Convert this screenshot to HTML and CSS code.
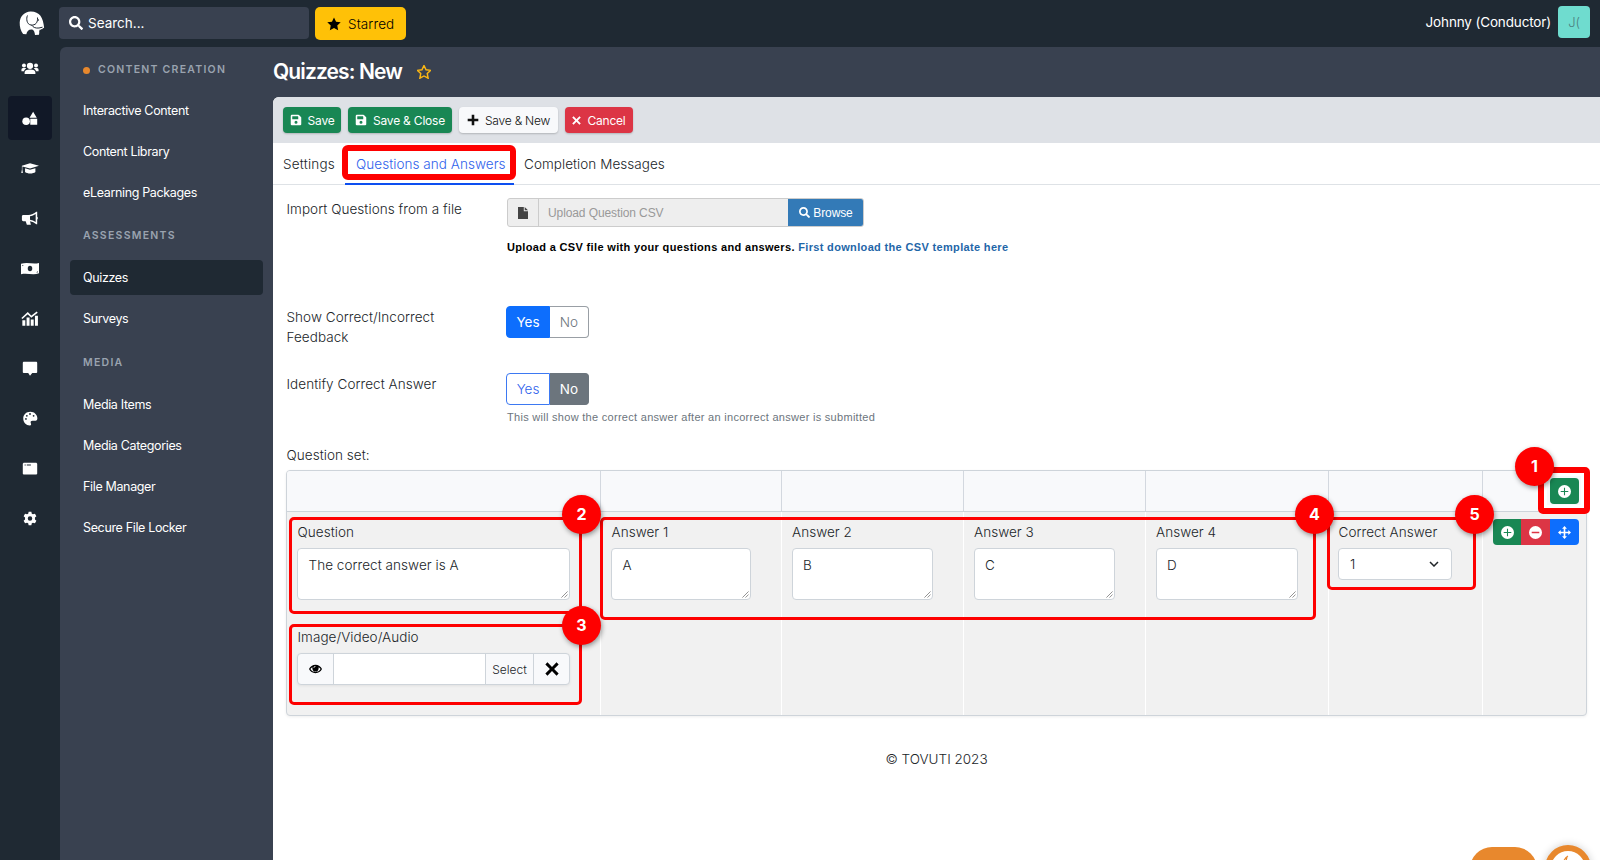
FILE: index.html
```
<!DOCTYPE html>
<html lang="en">
<head>
<meta charset="utf-8">
<title>Quizzes: New</title>
<link rel="stylesheet" href="styles.css">
</head>
<body>
<svg class="defs" aria-hidden="true">
  <symbol id="search" viewBox="0 0 512 512"><path d="M505 442.700 405.300 343c-4.500-4.500-10.600-7-17-7H372c27.600-35.300 44-79.700 44-128C416 93.100 322.900 0 208 0S0 93.100 0 208s93.100 208 208 208c48.300 0 92.700-16.400 128-44v16.300c0 6.400 2.500 12.500 7 17l99.700 99.700c9.400 9.400 24.600 9.400 33.900 0l28.300-28.300c9.400-9.400 9.400-24.600.1-34zM208 336c-70.700 0-128-57.200-128-128 0-70.700 57.200-128 128-128 70.700 0 128 57.200 128 128 0 70.700-57.200 128-128 128z"/></symbol>
  <symbol id="star" viewBox="0 0 24 24"><path d="m12 .8 3.500 7.300 8 1.100-5.900 5.500 1.500 8L12 18.800l-7.100 3.900 1.500-8L.5 9.200l8-1.100z"/></symbol>
  <symbol id="save" viewBox="0 0 448 512"><path d="M434 130 350 46a48 48 0 0 0-34-14H48A48 48 0 0 0 0 80v352a48 48 0 0 0 48 48h352a48 48 0 0 0 48-48V164a48 48 0 0 0-14-34zM224 416a64 64 0 1 1 0-128 64 64 0 0 1 0 128zm96-304v100a12 12 0 0 1-12 12H76a12 12 0 0 1-12-12V108a12 12 0 0 1 12-12h228z"/></symbol>
  <symbol id="times" viewBox="0 0 20 20"><path d="M3.500.5 10 7l6.500-6.500 3 3L13 10l6.500 6.500-3 3L10 13l-6.500 6.500-3-3L7 10 .5 3.500z"/></symbol>
  <symbol id="plus-circle" viewBox="0 0 24 24"><path fill-rule="evenodd" d="M12 0a12 12 0 1 1 0 24 12 12 0 0 1 0-24zM11 5v6H5v2h6v6h2v-6h6v-2h-6V5z"/></symbol>
</svg>

<header class="topbar">
  <svg class="logo" viewBox="0 0 25 25"><path fill="#fff" d="M11 .4C5 .6.6 5 .2 11.400 0 15.500 1.300 20 3.600 23l3.200.2c.7-2.800 2.300-4.800 4.900-4.800 2.300 0 3.300 1.400 3.800 5.500l4-.1.600-5c2 .2 4-.5 4.500-2.200C23.800 6.500 20 .2 11 .4z"/><path fill="none" stroke="#1f2933" stroke-width="1" d="M8 4.500c-1.500 3-.8 9 3.500 9.500 4.500.6 7-2.500 6.500-7.500M12 14c2 2.700 4 3.300 7.500 3l3.500-.8M20 20.300l4.300-3"/><circle cx="18.800" cy="9" r=".8" fill="#1f2933"/></svg>
  <div class="search"><svg><use href="#search"/></svg><span>Search...</span></div>
  <button class="starred"><svg><use href="#star"/></svg><span>Starred</span></button>
  <div class="user"><span>Johnny (Conductor)</span><div class="avatar">J(</div></div>
</header>

<div class="shell">
  <nav class="rail">
    <a><svg viewBox="0 0 20 16"><circle cx="10" cy="5" r="3.500"/><circle cx="3.300" cy="4.600" r="2.200"/><circle cx="16.700" cy="4.600" r="2.200"/><path d="M4 14v-1.500C4 10 6 9 10 9s6 1 6 3.500V14zM.5 11V9.500c0-1.700 1.300-2 3.500-2 .9 0 1.500.2 1.800.5C4.500 8.800 3.500 9.700 3.300 11zM19.500 11V9.500c0-1.700-1.300-2-3.500-2-.9 0-1.500.2-1.800.5 1.300.8 2.300 1.700 2.500 3z"/></svg></a>
    <a class="on"><svg viewBox="0 0 20 16"><path d="M13.500.5 17.500 7.300h-8zM10.300 8.300h7.700V15h-7.700z"/><circle cx="5.700" cy="11.100" r="4.200"/></svg></a>
    <a><svg viewBox="0 0 20 16"><path d="M10 2.200 20 5l-10 3L1.500 5.800V9l.6 4H.3L1 9V5zM4.500 7.800 10 9.400l6-1.800V12c-2.500 2.200-9 2.200-11.500 0z"/></svg></a>
    <a><svg viewBox="0 0 20 16"><path fill-rule="evenodd" d="M1 5.500C1 4.700 1.700 4 2.500 4H8c3.500 0 6.500-1.500 9-3.500h1V6c1 .6 1 2.400 0 3v5.500h-1c-2-1.600-4.500-3-7-3.400L11 15H6.500l-1.300-4H2.500C1.700 11 1 10.300 1 9.500zM10 5.500v4c2.300.4 4.400 1.300 6.300 2.500v-9C14.400 4.200 12.300 5.200 10 5.500z"/></svg></a>
    <a><svg viewBox="0 0 20 16"><path fill-rule="evenodd" d="M0 2.800c7-2.600 13 .8 20-1v11.600c-7 2.600-13-.8-20 1zM10 5a2.500 3 0 1 0 0 6 2.500 3 0 0 0 0-6zM1.500 4v1.600L3 4zM17 12.500h1.600v-1.600z"/></svg></a>
    <a><svg viewBox="0 0 20 16"><path d="M1.500 10h3.300v6H1.500zm4.700-3h3.300v9H6.200zM10.800 9h3.300v7h-3.300zm4.700-4h3.300v11h-3.300z"/><path d="M1 8l6.500-6 4 4L18 .8" fill="none" stroke="#fff" stroke-width="1.800"/></svg></a>
    <a><svg viewBox="0 0 20 16"><path d="M3.500.5h13c1 0 1.500.5 1.500 1.300v10c0 .8-.5 1.200-1.500 1.200h-4L10 16l-2-3H3.500C2.500 13 2 12.600 2 11.800v-10C2 1 2.500.5 3.500.5z"/></svg></a>
    <a><svg viewBox="0 0 20 16"><path fill-rule="evenodd" d="M10.500.5c-4.800 0-8 3.200-8 7.500s3.200 7.700 7.300 7.700c2 0 1.500-1.500 1-2.700-.4-1.500.4-2.500 2-2.500h3.400c1.300 0 2-1.200 2-2.500 0-4.300-3.500-7.500-7.700-7.500zM5.500 7.500a1 1 0 1 0 0 2 1 1 0 0 0 0-2zm1-3.500a1 1 0 1 0 0 2 1 1 0 0 0 0-2zM10 2a1 1 0 1 0 0 2 1 1 0 0 0 0-2zm4 2a1 1 0 1 0 0 2 1 1 0 0 0 0-2z"/></svg></a>
    <a><svg viewBox="0 0 20 16"><path fill-rule="evenodd" d="M3.500 1.500h13c.8 0 1.500.7 1.500 1.500v10.500c0 .6-.7 1.300-1.500 1.300h-13c-.8 0-1.500-.7-1.500-1.300V3c0-.8.700-1.500 1.500-1.500zM4 3.500v1.300h1.200V3.500zm2.400 0v1.300H11V3.500z"/></svg></a>
    <a><svg viewBox="0 0 20 16"><path fill-rule="evenodd" d="M8.500.5h3l.5 2.200 1.300.7 2.200-.7 1.600 2.700L15.500 7v2l1.600 1.600-1.600 2.700-2.200-.7-1.300.7-.5 2.200h-3L8 13.300l-1.300-.7-2.200.7-1.600-2.700L4.500 9V7L2.900 5.400l1.600-2.700 2.200.7L8 2.700zM10 5.500a2.500 2.500 0 1 0 0 5 2.500 2.500 0 0 0 0-5z"/></svg></a>
  </nav>

  <aside class="side">
    <h2 class="first"><i class="dot"></i>CONTENT CREATION</h2>
    <a>Interactive Content</a><a>Content Library</a><a>eLearning Packages</a>
    <h2 class="assess">ASSESSMENTS</h2>
    <a class="on">Quizzes</a><a>Surveys</a>
    <h2 class="media">MEDIA</h2>
    <a>Media Items</a><a>Media Categories</a><a>File Manager</a><a>Secure File Locker</a>
  </aside>

  <main class="main">
    <div class="title"><h1>Quizzes: New</h1><svg><use href="#star"/></svg></div>
    <section class="panel">
      <div class="toolbar">
        <button class="btn green w-save"><svg><use href="#save"/></svg><span>Save</span></button>
        <button class="btn green w-close"><svg><use href="#save"/></svg><span>Save &amp; Close</span></button>
        <button class="btn light w-new"><svg viewBox="0 0 14 14"><path d="M5.500.8h3v4.700h4.700v3H8.500v4.700h-3V8.500H.8v-3h4.700z"/></svg><span>Save &amp; New</span></button>
        <button class="btn red w-cancel"><svg class="x"><use href="#times"/></svg><span>Cancel</span></button>
      </div>
      <div class="tabs">
        <a class="tab t1">Settings</a><a class="tab t2 on">Questions and Answers</a><a class="tab t3">Completion Messages</a>
      </div>
      <div class="form">
        <div class="row import">
          <label>Import Questions from a file</label>
          <div class="ctl">
            <div class="upload">
              <span class="addon"><svg viewBox="0 0 10 12"><path d="M0 0h5.800v4.200H10V12H0zM6.700 0 10 3.300H6.700z"/></svg></span>
              <span class="field">Upload Question CSV</span>
              <span class="browse"><svg><use href="#search"/></svg><span>Browse</span></span>
            </div>
            <p class="note"><span>Upload a CSV file with your questions and answers. <a>First download the CSV template here</a></span></p>
          </div>
        </div>
        <div class="row feedback">
          <label>Show Correct/Incorrect<br>Feedback</label>
          <div class="ctl"><div class="toggle"><span class="yes filled">Yes</span><span class="no">No</span></div></div>
        </div>
        <div class="row identify">
          <label>Identify Correct Answer</label>
          <div class="ctl"><div class="toggle"><span class="yes">Yes</span><span class="no filled">No</span></div>
          <p class="hint"><span>This will show the correct answer after an incorrect answer is submitted</span></p></div>
        </div>
        <label class="set">Question set:</label>
        <div class="table">
          <div class="thead"><div></div><div></div><div></div><div></div><div></div><div></div>
            <div class="acts"><span class="act add solo"><svg><use href="#plus-circle"/></svg></span></div></div>
          <div class="tbody">
            <div class="cell">
              <label>Question</label><div class="area">The correct answer is A<svg class="grip" viewBox="0 0 8 8"><path d="M.5 7.500l7-7M4 7.500 7.500 4"/></svg></div>
              <label class="mlabel">Image/Video/Audio</label>
              <div class="mediabox">
                <span class="eye"><svg viewBox="0 0 14 10"><path fill-rule="evenodd" d="M7 .5C3.800.5 1.300 2.500 0 5c1.300 2.500 3.800 4.500 7 4.500s5.700-2 7-4.500C12.700 2.500 10.200.5 7 .5zM3.600 3C3.300 5.800 4.800 7.800 7 7.800s3.700-2 3.400-4.800c.8.500 1.500 1.200 2.100 2-1.200 1.900-3.100 3.300-5.500 3.300S2.700 6.900 1.500 5c.6-.8 1.300-1.500 2.100-2zM7 1.700c-1.300 0-2.100.9-2.100 2.100h.8c0-.8.500-1.300 1.300-1.300z"/></svg></span>
                <span class="path"></span><span class="sel">Select</span><span class="clr"><svg><use href="#times"/></svg></span>
              </div>
            </div>
            <div class="cell"><label>Answer 1</label><div class="area">A<svg class="grip" viewBox="0 0 8 8"><path d="M.5 7.500l7-7M4 7.500 7.500 4"/></svg></div></div>
            <div class="cell"><label>Answer 2</label><div class="area">B<svg class="grip" viewBox="0 0 8 8"><path d="M.5 7.500l7-7M4 7.500 7.500 4"/></svg></div></div>
            <div class="cell"><label>Answer 3</label><div class="area">C<svg class="grip" viewBox="0 0 8 8"><path d="M.5 7.500l7-7M4 7.500 7.500 4"/></svg></div></div>
            <div class="cell"><label>Answer 4</label><div class="area">D<svg class="grip" viewBox="0 0 8 8"><path d="M.5 7.500l7-7M4 7.500 7.500 4"/></svg></div></div>
            <div class="cell"><label>Correct Answer</label><div class="select"><span>1</span><svg viewBox="0 0 10 6"><path d="M1 1l4 4 4-4" fill="none" stroke="#212529" stroke-width="1.500"/></svg></div></div>
            <div class="acts">
              <span class="act add first-act"><svg><use href="#plus-circle"/></svg></span>
              <span class="act del"><svg viewBox="0 0 24 24"><path fill-rule="evenodd" d="M12 0a12 12 0 1 1 0 24 12 12 0 0 1 0-24zM5 10.500v3h14v-3z"/></svg></span>
              <span class="act move"><svg viewBox="0 0 24 24"><path d="m12 0 4.500 5h-3v5.500H19v-3l5 4.500-5 4.500v-3h-5.500V19h3L12 24l-4.500-5h3v-5.500H5v3L0 12l5-4.500v3h5.500V5h-3z"/></svg></span>
            </div>
          </div>
        </div>
        <footer>© TOVUTI 2023</footer>
      </div>
    </section>
  </main>
</div>

<div class="mark m-tab"></div>
<div class="mark m2"></div><div class="mark m3"></div><div class="mark m4"></div><div class="mark m5"></div><div class="mark m1"></div>
<b class="num n1">1</b><b class="num n2">2</b><b class="num n3">3</b><b class="num n4">4</b><b class="num n5">5</b>
<div class="pill"></div>
<div class="bubble"><svg viewBox="0 0 34 34"><path d="M12 12c1-3 3-6 5-7M15 10l1-4" fill="none" stroke="#e8882d" stroke-width="1.200"/></svg></div>
</body>
</html>
```
FILE: styles.css
```
* { box-sizing: border-box; }
body { margin: 0; width: 1600px; height: 860px; overflow: hidden; position: relative; background: #1f2933; font-family: Inter, "Liberation Sans", sans-serif; font-size: 13.5px; color: #212529; }
h1, h2, p { margin: 0; }
button { border: 0; font: inherit; padding: 0; }
svg { fill: currentColor; flex: none; display: block; }
.defs { position: absolute; width: 0; height: 0; }

.topbar { height: 47px; display: flex; align-items: flex-start; padding-left: 19px; color: #fff; }
.logo { width: 26px; height: 25px; margin-top: 11px; }
.search { width: 250px; height: 32px; margin: 7px 0 0 14px; padding-left: 10px; display: flex; align-items: center; background: #394150; border-radius: 4px; }
.search svg { width: 14px; height: 14px; margin-right: 5px; }
.starred { width: 91px; height: 33px; margin: 7px 0 0 6px; display: flex; align-items: center; padding-left: 12px; background: #ffc107; border-radius: 5px; color: #000; }
.starred svg { width: 14px; height: 14px; margin-right: 7px; }
.starred span { font-weight: 300; letter-spacing: .1px; }
.user { margin: 6px 10px 0 auto; display: flex; align-items: center; gap: 7px; letter-spacing: -.15px; }
.avatar { width: 32px; height: 32px; border-radius: 4px; background: #6fdccf; color: #4c817f; display: flex; align-items: center; justify-content: center; font-size: 13px; font-weight: 300; }

.shell { display: flex; height: 813px; }
.rail { width: 60px; margin-top: -1px; display: flex; flex-direction: column; align-items: center; gap: 6px; color: #fff; }
.rail a { width: 44px; height: 44px; border-radius: 4px; display: flex; align-items: center; justify-content: center; }
.rail a.on { background: #111827; }
.rail svg { width: 18px; height: 15px; }

.side { width: 213px; background: #394150; border-radius: 6px 0 0; padding: 0 10px; color: #fff; font-size: 12.5px; letter-spacing: -.35px; }
.side h2 { font-size: 10.5px; font-weight: 600; letter-spacing: 1.250px; color: #9aa3af; padding-left: 13px; line-height: 16px; display: flex; align-items: center; }
.side .first { margin: 15px 0 15px; }
.side .assess { margin: 18px 0 16px; }
.side .media { margin: 19px 0 16px; }
.dot { width: 7px; height: 7px; border-radius: 50%; background: #e8882d; margin-right: 8px; }
.side a { display: flex; align-items: center; height: 35px; margin-bottom: 6px; padding-left: 13px; border-radius: 4px; }
.side a.on { background: #1f2933; }

.main { width: 1327px; background: #394150; display: flex; flex-direction: column; }
.title { height: 50px; padding-bottom: 1px; display: flex; align-items: center; color: #fff; }
h1 { font-size: 21px; font-weight: 600; letter-spacing: -.88px; line-height: 30px; }
.title svg { width: 14px; height: 14px; margin-left: 15px; color: transparent; stroke: #fbb613; stroke-width: 2.500px; overflow: visible; }
.panel { flex: 1; background: #fff; border-top-left-radius: 6px; overflow: hidden; }
.toolbar { height: 46px; background: #dee1e6; display: flex; align-items: center; gap: 7px; padding-left: 10px; }
.btn { height: 26px; border-radius: 4px; display: flex; align-items: center; justify-content: center; gap: 6px; font-size: 12px; color: #fff; letter-spacing: -.2px; box-shadow: 0 1px 2px #0003; }
.btn svg { width: 12px; height: 12px; }
.btn svg.x { width: 9px; height: 9px; }
.green { background: #198754; }
.red { background: #dc3545; }
.light { background: #f8f9fb; color: #111; }
.light span { font-weight: 300; }
.w-save { width: 58px; } .w-close { width: 104px; } .w-new { width: 99px; } .w-cancel { width: 68px; }

.tabs { height: 42px; display: flex; border-bottom: 1px solid #dee2e6; }
.tab { height: 42px; padding-left: 11px; line-height: 42px; font-weight: 300; letter-spacing: .05px; white-space: nowrap; }
.t1 { width: 72px; padding-left: 10px; letter-spacing: .2px; } .t2 { width: 169px; } .t3 { padding-left: 10px; }
.tab.on { color: #2f62ec; border-bottom: 2px solid #0d4ff0; }

.form { padding-left: 13px; }
.form label { font-weight: 300; letter-spacing: .05px; line-height: 20px; display: block; color: #212529; padding-left: .5px; }
.row { display: flex; }
.row > label { width: 220px; }
.import { height: 122px; padding-top: 13px; }
.import > label { padding-top: 1px; }
.upload { display: flex; height: 29px; width: 357px; font-family: "Liberation Sans", Arial, sans-serif; font-size: 12px; letter-spacing: -.1px; border: 1px solid #ccc; border-radius: 3px; background: #eee; overflow: hidden; }
.upload > span { display: flex; align-items: center; }
.addon { width: 31px; border-right: 1px solid #ccc; justify-content: center; color: #444; }
.addon svg { width: 10px; height: 12px; }
.field { width: 250px; padding-left: 9px; color: #999; }
.browse { flex: 1; background: #337ab7; color: #fff; justify-content: center; gap: 3px; margin: -1px; }
.browse svg { width: 11px; height: 11px; }
.ctl { padding-left: 1px; }
.note { margin-top: 12px; font: bold 11px/16px "Liberation Sans", Arial, sans-serif; letter-spacing: .34px; color: #000; white-space: nowrap; }
.note a { color: #1f66a8; }
.toggle { display: flex; width: 83px; height: 32px; margin: -1px 0 0 -1px; border-radius: 4px; }
.toggle span { display: flex; align-items: center; justify-content: center; font-weight: 300; }
.yes { width: 44px; border: 1px solid #3d79f2; border-radius: 4px 0 0 4px; color: #2f62ec; }
.no { width: 39px; border: 1px solid #999fa5; border-left: 0; border-radius: 0 4px 4px 0; color: #6c757d; }
.toggle .filled { color: #fff; font-weight: 400; }
.yes.filled { background: #0d6efd; border-color: #0d6efd; }
.no.filled { background: #6c757d; border-color: #6c757d; }
.feedback { height: 67px; }
.identify { height: 71px; }
.hint { font: 11px/16px "Liberation Sans", Arial, sans-serif; letter-spacing: .29px; color: #6c757d; margin-top: 4px; white-space: nowrap; }
.set { height: 25px; }

.table { width: 1301px; height: 246px; border: 1px solid #ced4da; border-radius: 4px; background: #f1f1f1; overflow: hidden; box-shadow: 0 1px 3px #0001; }
.thead, .tbody { display: grid; grid-template-columns: 314px 181px 182px 182px 183px 154px 1fr; }
.thead { height: 41px; background: #f8f9fb; border-bottom: 1px solid #ced4da; }
.thead > div:not(:last-child) { border-right: 1px solid #d3d8df; }
.tbody { height: 204px; }
.cell { border-right: 1px solid #fff; padding: 10px 30px 0 10px; }
.cell:nth-child(2) { padding-left: 10px; }
.cell:nth-child(n+3) { padding-left: 9.5px; }
.cell:nth-child(6) { padding-left: 9px; }
.area { position: relative; height: 52px; margin-top: 6px; padding: 6px 10.5px; border: 1px solid #ced4da; border-radius: 4px; background: #fff; font-weight: 300; letter-spacing: .05px; line-height: 20px; white-space: nowrap; }
.grip { position: absolute; right: 1px; bottom: 1px; width: 7px; height: 7px; stroke: #666; stroke-width: .8px; fill: none; }
.form .mlabel { margin-top: 27px; }
.mediabox { height: 32px; width: 273px; margin-top: 6px; display: flex; border: 1px solid #ced4da; border-radius: 4px; background: #f8f9fb; overflow: hidden; box-shadow: 0 1px 3px #0001; }
.mediabox span { display: flex; align-items: center; justify-content: center; }
.mediabox span:not(:last-child) { border-right: 1px solid #ced4da; }
.eye { width: 36px; color: #000; } .eye svg { width: 13px; height: 10px; }
.path { width: 152px; background: #fff; }
.sel { width: 48px; font-size: 12px; font-weight: 300; }
.clr { flex: 1; color: #000; } .clr svg { width: 14px; height: 14px; }
.select { width: 114px; height: 32px; margin-top: 6px; padding: 0 12px 0 11px; border: 1px solid #ced4da; border-radius: 4px; background: #fff; display: flex; align-items: center; justify-content: space-between; font-weight: 300; }
.select svg { width: 10px; height: 6px; }
.acts { display: flex; justify-content: flex-end; padding: 7px 7px 0 0; }
.act { width: 29px; height: 26px; display: flex; align-items: center; justify-content: center; color: #fff; }
.act:first-child { border-radius: 4px 0 0 4px; }
.act:last-child { border-radius: 0 4px 4px 0; }
.act.solo { border-radius: 4px; }
.first-act { width: 28px; }
.act svg { width: 13px; height: 13px; }
.add { background: #198754; } .del { background: #dc3545; } .move { background: #0d6efd; }
footer { width: 1301px; margin-top: 33px; text-align: center; font-weight: 300; line-height: 20px; }

/* Numbered callouts drawn over the form */
.mark { position: absolute; border: 3px solid #fe0000; border-radius: 5px; }
.m-tab { left: 342px; top: 145px; width: 174px; height: 35px; border-width: 6px; border-radius: 6px; }
.m1 { left: 1538px; top: 467px; width: 52px; height: 47px; border-width: 6px; box-shadow: inset 0 0 0 3px #fff; }
.m2 { left: 289px; top: 517px; width: 293px; height: 97px; }
.m3 { left: 289px; top: 624px; width: 293px; height: 81px; }
.m4 { left: 600px; top: 517px; width: 716px; height: 103px; }
.m5 { left: 1327px; top: 517px; width: 149px; height: 73px; }
.num { position: absolute; width: 39px; height: 39px; border-radius: 50%; background: #fe0000; color: #fff; font-size: 16px; font-weight: 700; text-align: center; line-height: 39px; box-shadow: 1px 2px 5px #0006; }
.n1 { left: 1515px; top: 447px; }
.n2 { left: 562px; top: 495px; }
.n3 { left: 562px; top: 606px; }
.n4 { left: 1295px; top: 495px; }
.n5 { left: 1455px; top: 495px; }
.pill { position: absolute; left: 1470px; top: 847px; width: 67px; height: 50px; border-radius: 22px; background: #e8882d; }
.bubble { position: absolute; left: 1545px; top: 845px; width: 46px; height: 46px; border: 6px solid #e8882d; border-radius: 50%; background: #fff; box-shadow: 0 0 8px #0003; }
.bubble svg { width: 34px; height: 34px; }
```
